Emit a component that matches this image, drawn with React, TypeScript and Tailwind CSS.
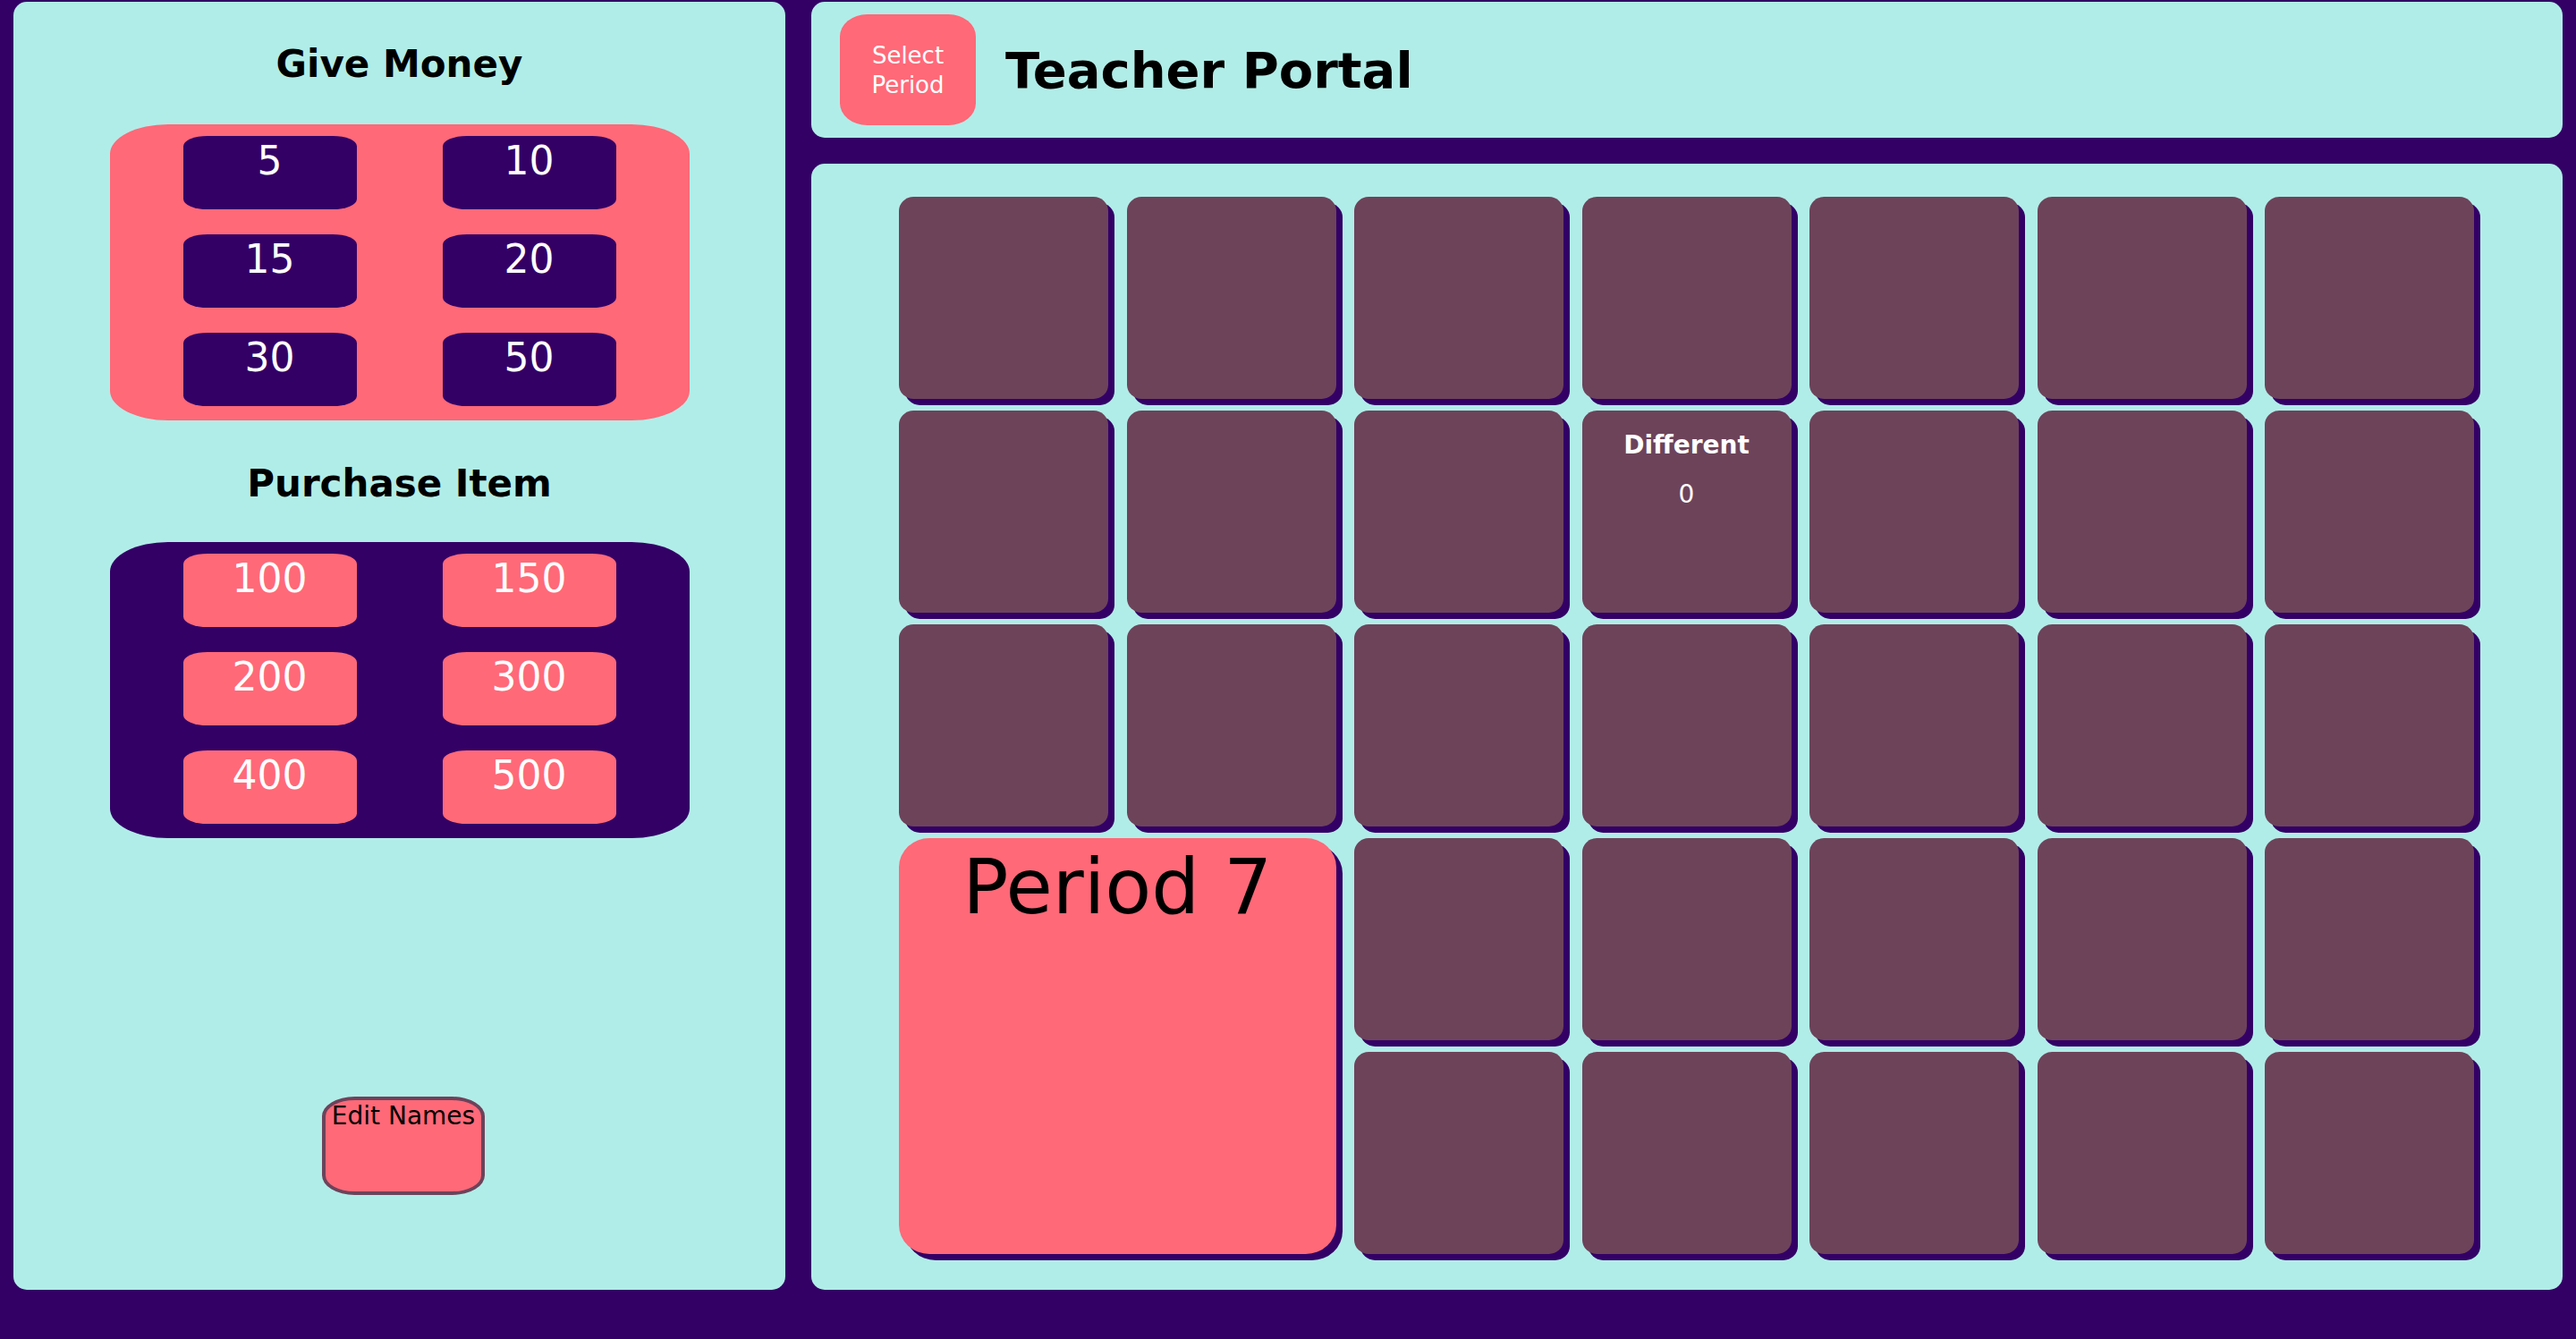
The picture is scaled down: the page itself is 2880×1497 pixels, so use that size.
import React from "react";

const giveAmounts = [5, 10, 15, 20, 30, 50];
const purchaseAmounts = [100, 150, 200, 300, 400, 500];

const AmountGrid = ({ amounts, dark }: { amounts: number[]; dark: boolean }) => (
  <div
    className={`mx-auto w-[648px] h-[331px] rounded-[10%] pt-[13px] px-[82px] grid grid-cols-[194px_194px] gap-x-[96px] gap-y-[28px] content-start ${
      dark ? "bg-[#330066]" : "bg-[#ff6978]"
    }`}
  >
    {amounts.map((a) => (
      <button
        key={a}
        className={`h-[82px] rounded-[14%] pt-[2px] text-white text-[44px] leading-[51px] flex justify-center items-start ${
          dark ? "bg-[#ff6978]" : "bg-[#330066]"
        }`}
      >
        {a}
      </button>
    ))}
  </div>
);

const Tile = ({ children }: { children?: React.ReactNode }) => (
  <div className="bg-[#6d435a] rounded-[7%] shadow-[7px_7px_0_#330066] flex flex-col items-center text-white">
    {children}
  </div>
);

const App = () => {
  const before = Array.from({ length: 21 }, (_, i) => i);
  const after = Array.from({ length: 10 }, (_, i) => i);

  return (
    <div className="w-full h-[1497px] overflow-hidden bg-[#330066] flex gap-[29px] pt-[2px] pl-[15px] font-['DejaVu_Sans',sans-serif]">
      {/* left side */}
      <div className="w-[863px] h-[1440px] bg-[#b1ede8] rounded-[15px] flex flex-col">
        <h2 className="mt-[45px] text-center text-[42px] leading-[49px] font-bold text-black">Give Money</h2>
        <div className="mt-[43px]">
          <AmountGrid amounts={giveAmounts} dark={false} />
        </div>
        <h2 className="mt-[46px] text-center text-[42px] leading-[49px] font-bold text-black">Purchase Item</h2>
        <div className="mt-[41px]">
          <AmountGrid amounts={purchaseAmounts} dark={true} />
        </div>
        <button className="mt-[289px] ml-[345px] w-[182px] h-[110px] border-4 border-[#6d435a] bg-[#ff6978] rounded-[20%] flex justify-center items-start pt-[1px] text-[28px] leading-[33px] text-black whitespace-nowrap">
          Edit Names
        </button>
      </div>

      {/* right side */}
      <div className="w-[1958px] flex flex-col gap-[29px]">
        <div className="h-[152px] bg-[#b1ede8] rounded-[15px] flex items-center pl-[32px] gap-[33px]">
          <button className="w-[152px] h-[124px] rounded-[20%] bg-[#ff6978] text-white text-[26px] leading-[33px] px-[20px] pt-[2px]">
            Select Period
          </button>
          <h1 className="text-[56px] leading-[65px] font-bold text-black">Teacher Portal</h1>
        </div>

        <div className="h-[1259px] bg-[#b1ede8] rounded-[15px] pt-[37px] px-[98px]">
          <div className="grid grid-cols-[repeat(7,234px)] grid-rows-[repeat(5,226px)] gap-x-[20.5px] gap-y-[13px]">
            {before.map((i) =>
              i === 10 ? (
                <Tile key={i}>
                  <div className="pt-[22px] text-[28px] leading-[33px] font-bold">Different</div>
                  <div className="mt-[22px] text-[28px] leading-[33px]">0</div>
                </Tile>
              ) : (
                <Tile key={i} />
              )
            )}
            <div className="col-span-2 row-span-2 bg-[#ff6978] rounded-[7%] shadow-[7px_7px_0_#330066] flex justify-center pt-[5px]">
              <span className="text-[85px] leading-[100px] text-black">Period 7</span>
            </div>
            {after.map((i) => (
              <Tile key={`a${i}`} />
            ))}
          </div>
        </div>
      </div>
    </div>
  );
};

export default App;
